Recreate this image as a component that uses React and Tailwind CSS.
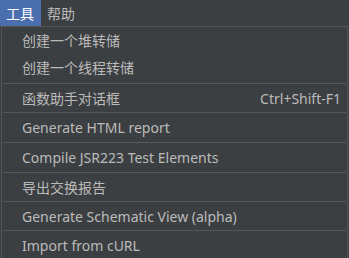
import React from 'react';

const font = { fontFamily: '"Noto Sans", "Noto Sans CJK SC", sans-serif' };

const Sep = () => <div className="h-px bg-[#55585a] mx-[1px]" />;

const Item = ({ label, shortcut, h = 'h-[26px]' }) => (
  <div className={`flex items-center justify-between pl-[20px] pr-[6px] ${h} text-[14px] text-[#bbbbbb]`}>
    <span>{label}</span>
    {shortcut && <span>{shortcut}</span>}
  </div>
);

export default function App() {
  return (
    <div className="w-[349px] h-[258px] bg-[#3c3f41] overflow-hidden" style={font}>
      <div className="flex h-[26px] text-[14px]">
        <div className="flex items-center pl-[6px] pr-[7px] bg-[#4b6eaf] text-white">工具</div>
        <div className="flex items-center px-[6px] text-[#bbbbbb]">帮助</div>
      </div>
      <div className="ml-[1px] w-[347px] border border-[#555555] border-b-0 bg-[#3c3f41]">
        <Item label="创建一个堆转储" h="h-[27px]" />
        <Item label="创建一个线程转储" />
        <div className="h-[3px]" />
        <Sep />
        <Item label="函数助手对话框" shortcut="Ctrl+Shift-F1" h="h-[28px]" />
        <Sep />
        <Item label="Generate HTML report" h="h-[29px]" />
        <Sep />
        <Item label="Compile JSR223 Test Elements" h="h-[29px]" />
        <Sep />
        <Item label="导出交换报告" h="h-[28px]" />
        <Sep />
        <Item label="Generate Schematic View (alpha)" h="h-[28px]" />
        <Sep />
        <Item label="Import from cURL" h="h-[29px]" />
      </div>
    </div>
  );
}
